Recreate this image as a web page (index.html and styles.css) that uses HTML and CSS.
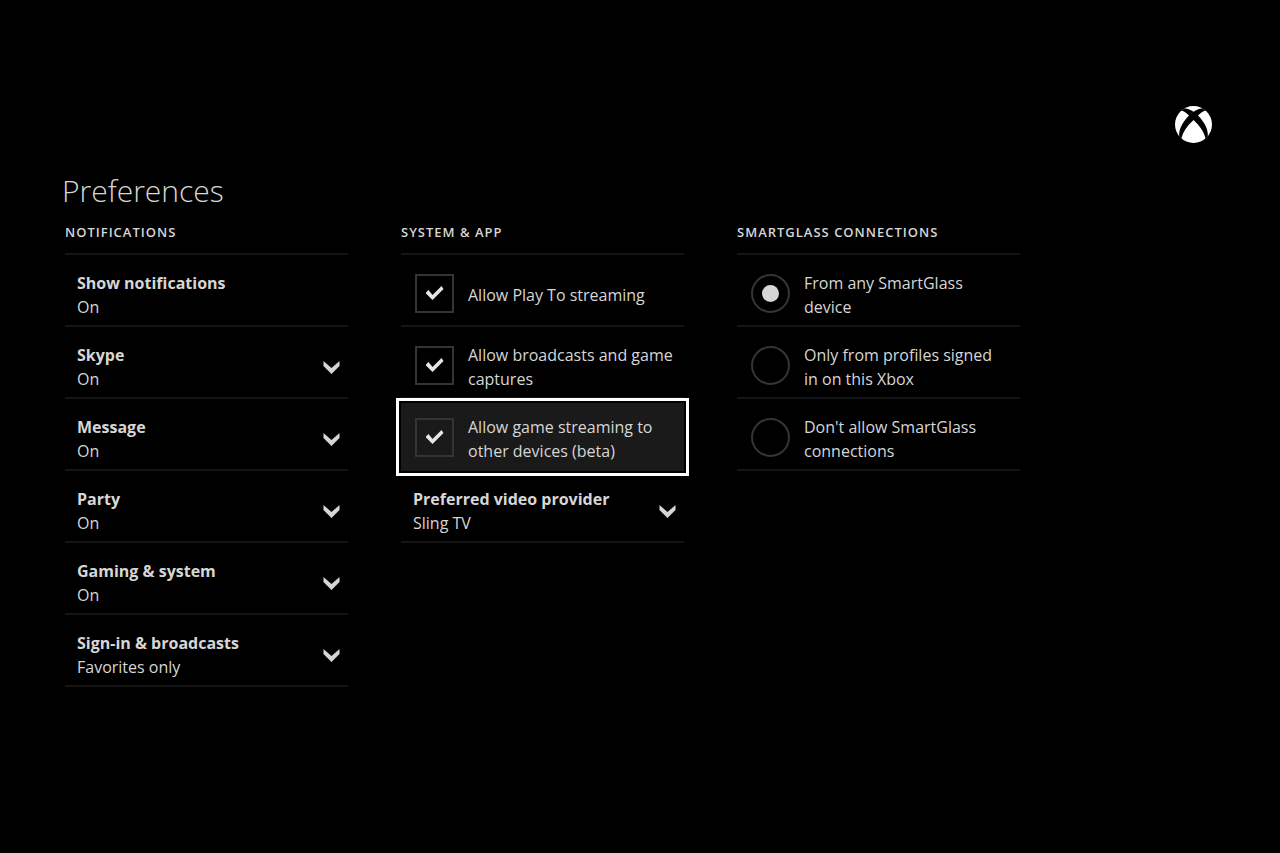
FILE: index.html
```html
<!DOCTYPE html>
<html lang="en">
<head>
    <meta charset="UTF-8">
    <meta name="viewport" content="width=device-width, initial-scale=1.0">
    <title>Preferences</title>
    <link rel="stylesheet" href="styles.css">
</head>
<body>
    <header class="top-bar">
        <svg class="logo" viewBox="0 0 37 37" role="img" aria-label="Xbox">
            <circle cx="18.5" cy="18.5" r="18.5" fill="#fff"/>
            <path d="M6 4.5 L9.5 2.6 C12.5 2.4 15.5 3.8 18.5 5.8 C21.5 3.8 24.5 2.4 27.5 2.6 L31 4.5 C28.5 4.6 26 6.4 23 9.6 C28 15 33.5 22 32.8 30.5 L30.6 32.8 C29.5 26.5 24.5 19.5 18.5 14 C12.5 19.5 7.5 26.5 6.4 32.8 L4.2 30.5 C3.5 22 9 15 14 9.6 C11 6.4 8.5 4.6 6 4.5 Z" fill="#000"/>
        </svg>
    </header>

    <main class="preferences">
        <h1 class="title">Preferences</h1>

        <div class="columns">
            <section>
                <h2 class="section-title">NOTIFICATIONS</h2>
                <button class="row setting" type="button">
                    <span class="setting-name">Show notifications</span>
                    <span class="setting-value">On</span>
                </button>
                <div class="row setting">
                    <label class="setting-name" for="skype">Skype</label>
                    <select class="setting-value" id="skype"><option>On</option><option>Off</option></select>
                    <svg class="chevron" viewBox="0 0 16 13"><path d="M0 0 L8 7 L16 0 V5 L8 13 L0 5 Z"/></svg>
                </div>
                <div class="row setting">
                    <label class="setting-name" for="message">Message</label>
                    <select class="setting-value" id="message"><option>On</option><option>Off</option></select>
                    <svg class="chevron" viewBox="0 0 16 13"><path d="M0 0 L8 7 L16 0 V5 L8 13 L0 5 Z"/></svg>
                </div>
                <div class="row setting">
                    <label class="setting-name" for="party">Party</label>
                    <select class="setting-value" id="party"><option>On</option><option>Off</option></select>
                    <svg class="chevron" viewBox="0 0 16 13"><path d="M0 0 L8 7 L16 0 V5 L8 13 L0 5 Z"/></svg>
                </div>
                <div class="row setting">
                    <label class="setting-name" for="gaming">Gaming &amp; system</label>
                    <select class="setting-value" id="gaming"><option>On</option><option>Off</option></select>
                    <svg class="chevron" viewBox="0 0 16 13"><path d="M0 0 L8 7 L16 0 V5 L8 13 L0 5 Z"/></svg>
                </div>
                <div class="row setting">
                    <label class="setting-name" for="sign-in">Sign-in &amp; broadcasts</label>
                    <select class="setting-value" id="sign-in"><option>Favorites only</option></select>
                    <svg class="chevron" viewBox="0 0 16 13"><path d="M0 0 L8 7 L16 0 V5 L8 13 L0 5 Z"/></svg>
                </div>
            </section>

            <section>
                <h2 class="section-title">SYSTEM &amp; APP</h2>
                <label class="row option">
                    <input type="checkbox" checked>
                    <span>Allow Play To streaming</span>
                </label>
                <label class="row option">
                    <input type="checkbox" checked>
                    <span>Allow broadcasts and game captures</span>
                </label>
                <label class="row option selected">
                    <input type="checkbox" checked>
                    <span>Allow game streaming to other devices (beta)</span>
                </label>
                <div class="row setting">
                    <label class="setting-name" for="provider">Preferred video provider</label>
                    <select class="setting-value" id="provider"><option>Sling TV</option></select>
                    <svg class="chevron" viewBox="0 0 16 13"><path d="M0 0 L8 7 L16 0 V5 L8 13 L0 5 Z"/></svg>
                </div>
            </section>

            <section>
                <h2 class="section-title">SMARTGLASS CONNECTIONS</h2>
                <label class="row option">
                    <input type="radio" name="smartglass" checked>
                    <span>From any SmartGlass device</span>
                </label>
                <label class="row option">
                    <input type="radio" name="smartglass">
                    <span>Only from profiles signed in&nbsp;on this Xbox</span>
                </label>
                <label class="row option">
                    <input type="radio" name="smartglass">
                    <span>Don't allow SmartGlass connections</span>
                </label>
            </section>
        </div>
    </main>
</body>
</html>
```
FILE: styles.css
```css
:root {
    --text-color: #d6d6d6;
    --line-color: #151515;
    --control-border: #343434;
    --selected-bg: #1a1a1a;
}

* {
    margin: 0;
    padding: 0;
    box-sizing: border-box;
}

body {
    background-color: #000;
    color: var(--text-color);
    font-family: "Open Sans", "Noto Sans", sans-serif;
    font-size: 16px;
    line-height: 24px;
    min-height: 100vh;
}

.top-bar {
    display: flex;
    justify-content: flex-end;
    padding: 106px 68px 0;
}

.logo {
    width: 37px;
    height: 37px;
}

.preferences {
    padding: 24px 260px 40px 65px;
}

.title {
    font-size: 30px;
    font-weight: 300;
    line-height: 48px;
    margin: 0 0 8px -3px;
}

.columns {
    display: grid;
    grid-template-columns: repeat(3, 1fr);
    align-items: start;
    gap: 53px;
}

.section-title {
    font-size: 13px;
    font-weight: 600;
    line-height: 18px;
    letter-spacing: 1px;
    padding-bottom: 12px;
    border-bottom: 2px solid var(--line-color);
}

.row {
    width: 100%;
    min-height: 72px;
    padding: 16px 12px 6px;
    border: none;
    border-bottom: 2px solid var(--line-color);
}

.setting {
    display: flex;
    flex-direction: column;
    position: relative;
    background: none;
    color: inherit;
    font: inherit;
    text-align: left;
}

.setting-name {
    font-weight: 700;
}

.setting-value {
    appearance: none;
    width: 100%;
    height: 24px;
    background: none;
    border: none;
    color: inherit;
    font: inherit;
}

.chevron {
    position: absolute;
    right: 8px;
    top: 34px;
    width: 17px;
    height: 13px;
    fill: var(--text-color);
    pointer-events: none;
}

.option {
    display: flex;
    align-items: center;
    gap: 14px;
    padding-left: 14px;
    padding-right: 8px;
}

.option input {
    appearance: none;
    display: grid;
    place-content: center;
    flex: none;
    width: 39px;
    height: 39px;
    margin-bottom: 4px;
    border: 2px solid var(--control-border);
}

.option input[type="radio"] {
    border-radius: 50%;
}

.option input[type="checkbox"]:checked::before {
    content: "";
    width: 18px;
    height: 14px;
    background-color: #e6e6e6;
    clip-path: polygon(0 7px, 3px 4px, 7px 9px, 16px 0, 18px 3px, 7px 14px);
}

.option input[type="radio"]:checked::before {
    content: "";
    width: 17px;
    height: 17px;
    border-radius: 50%;
    background-color: var(--text-color);
}

.selected {
    min-height: 68px;
    margin-top: 4px;
    padding-top: 12px;
    background-color: var(--selected-bg);
    border-bottom-color: var(--selected-bg);
    outline: 3px solid #fff;
    outline-offset: 2px;
}
```
